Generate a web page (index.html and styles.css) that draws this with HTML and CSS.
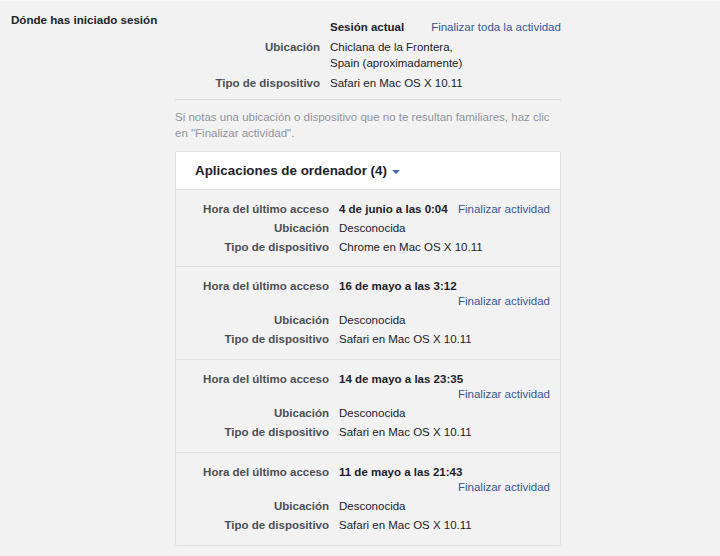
FILE: index.html
```html
<!DOCTYPE html>
<html lang="es">
<head>
<meta charset="utf-8">
<title>Dónde has iniciado sesión</title>
<link rel="stylesheet" href="styles.css">
</head>
<body>
<div class="page">
  <h2 class="title">Dónde has iniciado sesión</h2>
  <div class="content">
    <div class="current">
      <div class="label"></div>
      <div class="value head"><strong>Sesión actual</strong><a href="#" class="link">Finalizar toda la actividad</a></div>
      <div class="label">Ubicación</div>
      <div class="value">Chiclana de la Frontera,<br>Spain (aproximadamente)</div>
      <div class="label">Tipo de dispositivo</div>
      <div class="value">Safari en Mac OS X 10.11</div>
    </div>
    <hr class="sep">
    <p class="hint">Si notas una ubicación o dispositivo que no te resultan familiares, haz clic en "Finalizar actividad".</p>

    <section class="card">
      <header class="card-head">Aplicaciones de ordenador (4) <span class="caret"></span></header>

      <div class="session">
        <div class="label">Hora del último acceso</div>
        <div class="value when"><strong>4 de junio a las 0:04</strong><a href="#" class="link">Finalizar actividad</a></div>
        <div class="label">Ubicación</div>
        <div class="value">Desconocida</div>
        <div class="label">Tipo de dispositivo</div>
        <div class="value">Chrome en Mac OS X 10.11</div>
      </div>

      <div class="session">
        <div class="label">Hora del último acceso</div>
        <div class="value when wrap"><strong>16 de mayo a las 3:12</strong><a href="#" class="link">Finalizar actividad</a></div>
        <div class="label">Ubicación</div>
        <div class="value">Desconocida</div>
        <div class="label">Tipo de dispositivo</div>
        <div class="value">Safari en Mac OS X 10.11</div>
      </div>

      <div class="session">
        <div class="label">Hora del último acceso</div>
        <div class="value when wrap"><strong>14 de mayo a las 23:35</strong><a href="#" class="link">Finalizar actividad</a></div>
        <div class="label">Ubicación</div>
        <div class="value">Desconocida</div>
        <div class="label">Tipo de dispositivo</div>
        <div class="value">Safari en Mac OS X 10.11</div>
      </div>

      <div class="session">
        <div class="label">Hora del último acceso</div>
        <div class="value when wrap"><strong>11 de mayo a las 21:43</strong><a href="#" class="link">Finalizar actividad</a></div>
        <div class="label">Ubicación</div>
        <div class="value">Desconocida</div>
        <div class="label">Tipo de dispositivo</div>
        <div class="value">Safari en Mac OS X 10.11</div>
      </div>
    </section>
  </div>
</div>
</body>
</html>
```

FILE: styles.css
```css
html, body {
  margin: 0;
  padding: 0;
  background: #f2f2f2;
}
body {
  font-family: "Liberation Sans", Arial, Helvetica, sans-serif;
  font-size: 11.5px;
  color: #1d2129;
}
.page {
  display: grid;
  grid-template-columns: 164px 386px;
  padding: 11px 11px 0 11px;
  border-top: 1px solid #f8f8f8;
}
.title {
  margin: 0;
  font-size: 11.6px;
  line-height: 16px;
  font-weight: bold;
  color: #1d2129;
}
.content {
  padding-top: 5px;
}
.current {
  display: grid;
  grid-template-columns: 145px 1fr;
  column-gap: 10px;
  line-height: 16px;
}
.current .label,
.current .value {
  padding: 2px 0;
}
.label {
  text-align: right;
  font-weight: bold;
  color: #4b4f56;
}
.value {
  color: #1d2129;
}
.head {
  display: flex;
  gap: 27px;
  white-space: nowrap;
}
.head strong {
  color: #1d2129;
}
.link {
  color: #365899;
  text-decoration: none;
}
.sep {
  border: 0;
  border-top: 1px solid #d6d7d9;
  margin: 6px 0 0 0;
}
.hint {
  margin: 9px 0 0 0;
  line-height: 16px;
  color: #90949c;
}
.card {
  margin-top: 10px;
  border: 1px solid #dddfe2;
  border-radius: 2px;
  background: #f2f2f2;
}
.card-head {
  background: #ffffff;
  padding: 10px 19px 9px;
  font-size: 13.4px;
  line-height: 18px;
  font-weight: bold;
  color: #1d2129;
  border-bottom: 1px solid #dddfe2;
}
.caret {
  display: inline-block;
  width: 0;
  height: 0;
  border-left: 4px solid transparent;
  border-right: 4px solid transparent;
  border-top: 4px solid #4267b2;
  vertical-align: middle;
  margin-left: 1px;
  position: relative;
  top: 1px;
}
.session {
  display: grid;
  grid-template-columns: 153px 1fr;
  column-gap: 10px;
  row-gap: 4px;
  padding: 12px 10px 12px 0;
  line-height: 15px;
  border-top: 1px solid #dddfe2;
}
.session:first-of-type {
  border-top: 0;
  padding-bottom: 11px;
}
.when {
  display: flex;
  column-gap: 6px;
  white-space: nowrap;
}
.when .link {
  margin-left: auto;
}
.wrap {
  flex-wrap: wrap;
}
.wrap .link {
  flex-basis: 100%;
  text-align: right;
}
```
